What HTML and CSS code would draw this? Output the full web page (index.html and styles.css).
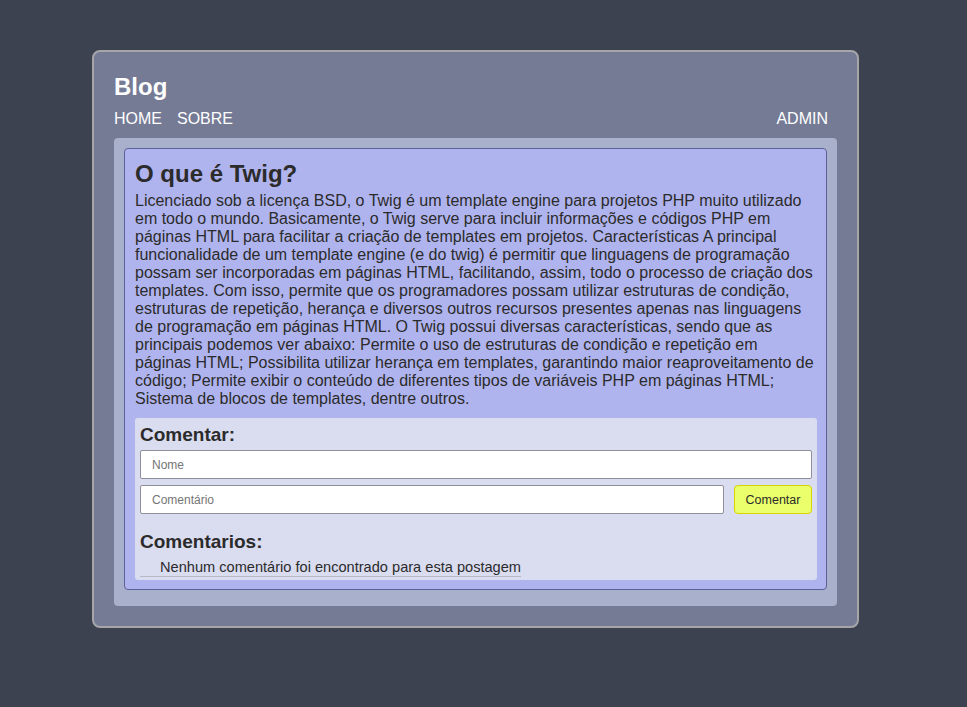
FILE: index.html
```html
<!DOCTYPE html>
<html lang="pt-BR">
<head>
<meta charset="utf-8">
<title>Blog</title>
<link rel="stylesheet" href="styles.css">
</head>
<body>
<div class="page">
  <div class="card">
    <header class="header">
      <h1 class="brand">Blog</h1>
      <nav class="nav">
        <div class="nav-left">
          <a class="nav-link" href="#">HOME</a>
          <a class="nav-link" href="#">SOBRE</a>
        </div>
        <a class="nav-link" href="#">ADMIN</a>
      </nav>
    </header>
    <main class="panel">
      <article class="post">
        <h2 class="post-title">O que é Twig?</h2>
        <p class="post-body">Licenciado sob a licença BSD, o Twig é um template engine para projetos PHP muito utilizado em todo o mundo. Basicamente, o Twig serve para incluir informações e códigos PHP em páginas HTML para facilitar a criação de templates em projetos. Características A principal funcionalidade de um template engine (e do twig) é permitir que linguagens de programação possam ser incorporadas em páginas HTML, facilitando, assim, todo o processo de criação dos templates. Com isso, permite que os programadores possam utilizar estruturas de condição, estruturas de repetição, herança e diversos outros recursos presentes apenas nas linguagens de programação em páginas HTML. O Twig possui diversas características, sendo que as principais podemos ver abaixo: Permite o uso de estruturas de condição e repetição em páginas HTML; Possibilita utilizar herança em templates, garantindo maior reaproveitamento de código; Permite exibir o conteúdo de diferentes tipos de variáveis PHP em páginas HTML; Sistema de blocos de templates, dentre outros.</p>
        <section class="comments">
          <h3 class="comments-title">Comentar:</h3>
          <form class="comment-form">
            <input class="field" type="text" placeholder="Nome">
            <div class="form-row">
              <input class="field field-grow" type="text" placeholder="Comentário">
              <button class="btn" type="button">Comentar</button>
            </div>
          </form>
          <h3 class="comments-title comments-list-title">Comentarios:</h3>
          <ul class="comment-list">
            <li class="comment-empty">Nenhum comentário foi encontrado para esta postagem</li>
          </ul>
        </section>
      </article>
    </main>
  </div>
</div>
</body>
</html>
```

FILE: styles.css
```css
html, body {
  margin: 0;
  padding: 0;
}
body {
  background: #3d4250;
  font-family: "Liberation Sans", Arial, sans-serif;
  color: #2b2b2b;
  min-height: 707px;
}
.page {
  padding: 50px 0 0 92px;
}
.card {
  width: 723px;
  background: #757b95;
  border: 2px solid #a6a6a8;
  border-radius: 8px;
  padding: 20px;
}
.brand {
  margin: 1px 0 0;
  font-size: 24px;
  line-height: 28px;
  color: #ffffff;
  font-weight: bold;
}
.nav {
  display: flex;
  justify-content: space-between;
  padding: 9px 9px 0 0;
  height: 18px;
}
.nav-left {
  display: flex;
  gap: 15px;
}
.nav-link {
  color: #ffffff;
  text-decoration: none;
  font-size: 16px;
  line-height: 18px;
}
.panel {
  margin-top: 10px;
  background: #a8b0cc;
  border-radius: 4px;
  padding: 10px 10px 16px;
}
.post {
  background: #b0b4ee;
  border: 1px solid #5c6096;
  border-radius: 4px;
  padding: 10px 9px 9px 10px;
}
.post-title {
  margin: 0 0 4px;
  font-size: 24px;
  line-height: 28px;
  padding-top: 1px;
}
.post-body {
  margin: 0 0 10px;
  font-size: 16px;
  line-height: 18px;
}
.comments {
  background: #dadcf0;
  border-radius: 3px;
  padding: 5px 5px 3px;
}
.comments-title {
  margin: 0 0 4px;
  font-size: 19px;
  line-height: 23px;
}
.comment-form {
  display: flex;
  flex-direction: column;
  gap: 6px;
}
.form-row {
  display: flex;
  gap: 10px;
}
.field {
  box-sizing: border-box;
  height: 29px;
  border: 1px solid #8f8f99;
  border-radius: 2px;
  background: #ffffff;
  padding: 0 11px;
  font-family: "Liberation Sans", Arial, sans-serif;
  font-size: 12px;
  color: #333;
  outline: none;
}
.field::placeholder {
  color: #757575;
}
.field-grow {
  flex: 1;
}
.btn {
  box-sizing: border-box;
  width: 78px;
  height: 29px;
  background: #eaff6b;
  border: 1px solid #d8d400;
  border-radius: 4px;
  font-family: "Liberation Sans", Arial, sans-serif;
  font-size: 12.5px;
  color: #2b2b2b;
  padding: 0;
}
.comments-list-title {
  margin-top: 16px;
  margin-bottom: 0;
}
.comment-list {
  margin: 5px 0 0;
  padding: 0;
  list-style: none;
}
.comment-empty {
  display: inline-block;
  padding: 1px 0 0 20px;
  font-size: 14.6px;
  line-height: 17px;
  border-bottom: 1px solid #b8b8c4;
}
```
